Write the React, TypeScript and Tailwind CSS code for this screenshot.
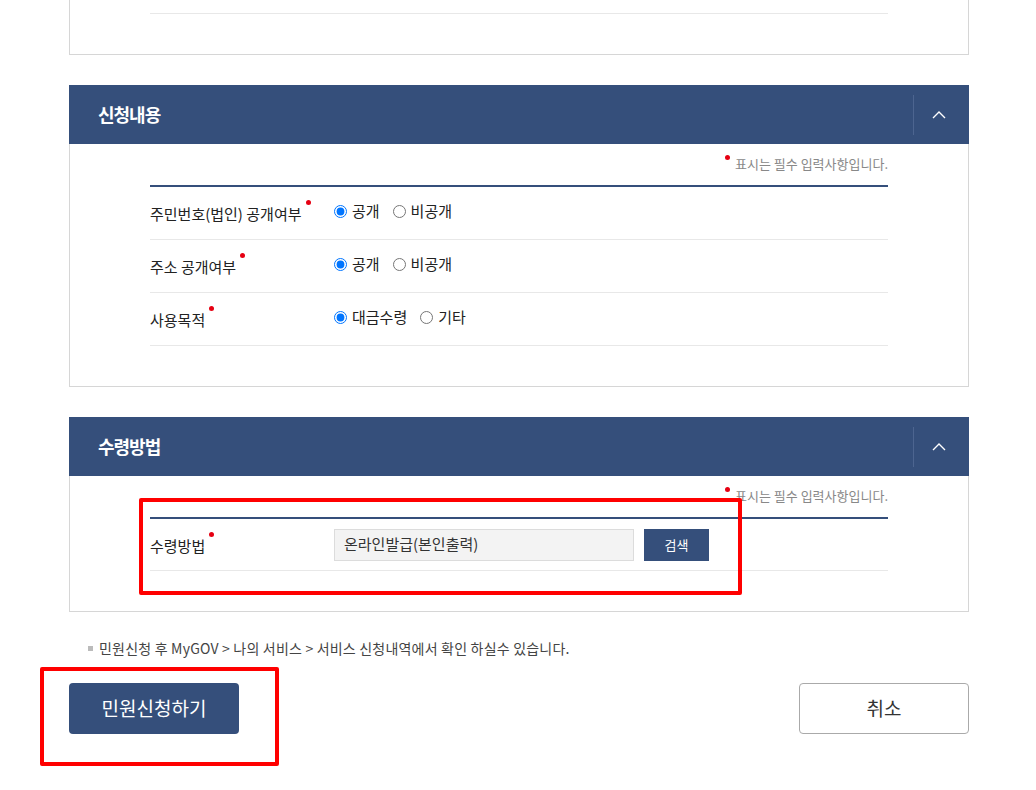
import React from "react";

const font = "font-['Noto_Sans_CJK_KR','Noto_Sans',sans-serif]";

function Dot() {
  return <span className="absolute -right-[9px] top-[-3px] h-[5px] w-[5px] rounded-full bg-[#e60012]" />;
}

function Radio({ name, label, checked }: { name: string; label: string; checked?: boolean }) {
  return (
    <label className="mr-[13px] flex items-center gap-[5px] text-[15px] text-[#222]">
      <input type="radio" name={name} defaultChecked={checked} className="m-0 h-[13px] w-[13px] accent-[#0075ff]" />
      {label}
    </label>
  );
}

function SectionHeader({ title }: { title: string }) {
  return (
    <div className="flex h-[59px] items-center bg-[#354f7b]">
      <h2 className="flex-1 pl-[29px] text-[18px] font-bold tracking-[-1px] text-white">{title}</h2>
      <div className="flex h-[40px] w-[56px] items-center justify-center border-l border-[#4d6590] pr-[6px]">
        <svg width="14" height="9" viewBox="0 0 14 9" fill="none">
          <path d="M1 8 L7 2 L13 8" stroke="#fff" strokeWidth="1.4" />
        </svg>
      </div>
    </div>
  );
}

function Required() {
  return (
    <div className="flex h-[41px] items-center justify-end pb-[1px]">
      <span className="relative text-[13px] tracking-[0px] text-[#888]">
        <span className="absolute -left-[10px] top-[1px] h-[5px] w-[5px] rounded-full bg-[#e60012]" />
        표시는 필수 입력사항입니다.
      </span>
    </div>
  );
}

function Row({ label, children }: { label: string; children: React.ReactNode }) {
  return (
    <div className="flex h-[53px] items-center border-b border-[#e8e8e8]">
      <div className="w-[184px] pt-[2px] text-[15px] text-[#222]">
        <span className="relative">
          {label}
          <Dot />
        </span>
      </div>
      <div className="flex items-center pb-[3px]">{children}</div>
    </div>
  );
}

export default function App() {
  return (
    <div className={`relative min-h-[790px] w-[1036px] bg-white ${font}`}>
      <div className="ml-[69px] w-[900px] pb-[57px]">
        <div className="h-[55px] border border-t-0 border-[#d6d6d6] px-[80px]">
          <div className="h-[14px] border-b border-[#e8e8e8]" />
        </div>

        <div className="mt-[30px]">
          <SectionHeader title="신청내용" />
          <div className="border border-t-0 border-[#d6d6d6] px-[80px] pb-[40px]">
            <Required />
            <div className="border-t-2 border-[#354f7b]">
              <Row label="주민번호(법인) 공개여부">
                <Radio name="r1" label="공개" checked />
                <Radio name="r1" label="비공개" />
              </Row>
              <Row label="주소 공개여부">
                <Radio name="r2" label="공개" checked />
                <Radio name="r2" label="비공개" />
              </Row>
              <Row label="사용목적">
                <Radio name="r3" label="대금수령" checked />
                <Radio name="r3" label="기타" />
              </Row>
            </div>
          </div>
        </div>

        <div className="mt-[30px]">
          <SectionHeader title="수령방법" />
          <div className="border border-t-0 border-[#d6d6d6] px-[80px] pb-[40px]">
            <Required />
            <div className="border-t-2 border-[#354f7b]">
              <div className="flex h-[52px] items-center border-b border-[#e8e8e8]">
                <div className="w-[184px] pt-[4px] text-[15px] text-[#222]">
                  <span className="relative">
                    수령방법
                    <Dot />
                  </span>
                </div>
                <div className="flex h-[32px] w-[300px] items-center border border-[#dcdcdc] bg-[#f3f3f3] pl-[9px] text-[15px] text-[#333]">
                  온라인발급(본인출력)
                </div>
                <button className="ml-[10px] h-[32px] w-[65px] bg-[#354f7b] text-[13px] text-white">검색</button>
              </div>
            </div>
          </div>
        </div>

        <p className="mt-[26px] flex items-center pl-[19px] text-[14px] tracking-[0.2px] text-[#444]">
          <span className="mr-[6px] h-[5px] w-[5px] bg-[#bbb]" />
          민원신청 후 MyGOV &gt; 나의 서비스 &gt; 서비스 신청내역에서 확인 하실수 있습니다.
        </p>

        <div className="mt-[24px] flex justify-between">
          <button className="h-[51px] w-[170px] rounded-[4px] bg-[#354f7b] text-[19px] text-white">민원신청하기</button>
          <button className="h-[51px] w-[170px] rounded-[4px] border border-[#aaa] bg-white text-[19px] text-[#333]">취소</button>
        </div>
      </div>

      <div className="pointer-events-none absolute left-[139px] top-[498px] h-[97px] w-[603px] rounded-[2px] border-4 border-[#ff0000]" />
      <div className="pointer-events-none absolute left-[40px] top-[667px] h-[99px] w-[239px] rounded-[2px] border-4 border-[#ff0000]" />
    </div>
  );
}
